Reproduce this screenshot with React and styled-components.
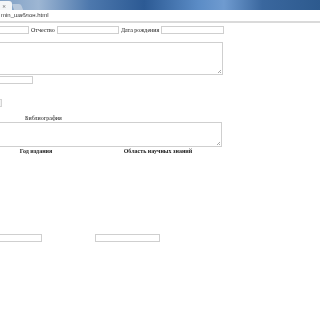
import React from 'react';
import styled, { createGlobalStyle } from 'styled-components';

const Global = createGlobalStyle`
  html, body {
    margin: 0;
    padding: 0;
    width: 320px;
    height: 320px;
    overflow: hidden;
    background: #ffffff;
  }
`;

function App() {
  return (
    <Window>
      <Global />
      <TitleBar>
        <Tab>
          <Close>×</Close>
        </Tab>
        <NewTab />
      </TitleBar>
      <AddressBar>min_шаблон.html</AddressBar>
      <Page>
        <Form>
          <Row>
            <Field $w={41} />
            <Label>Отчество</Label>
            <Field $w={62} />
            <Label>Дата рождения</Label>
            <Field $w={63} />
          </Row>
          <Area $w={235} $h={33} $top={8} />
          <Field $w={45} $top={1} />
          <Stub />
          <Caption>Библиография</Caption>
          <Area $w={234} $h={25} $top={0} />
          <HeadRow>
            <Head>Год издания</Head>
            <Head>Область научных знаний</Head>
          </HeadRow>
          <BottomRow>
            <Field $w={54} />
            <Field $w={65} />
          </BottomRow>
        </Form>
      </Page>
    </Window>
  );
}

const Window = styled.div`
  width: 320px;
  height: 320px;
  display: flex;
  flex-direction: column;
  overflow: hidden;
  will-change: transform;
`;

const TitleBar = styled.div`
  height: 10px;
  display: flex;
  align-items: flex-end;
  background: linear-gradient(90deg, #7f9fc4 0%, #9db6d3 12%, #4d78ad 28%, #2c5a94 45%, #5b8cc6 62%, #6f9bd0 70%, #3a679e 82%, #2d5a8e 100%);
`;

const Tab = styled.div`
  width: 10px;
  height: 9px;
  background: #f3f5f7;
  border-top-right-radius: 3px;
  display: flex;
  align-items: center;
  padding-left: 2px;
`;

const Close = styled.span`
  font: 5px "DejaVu Sans", sans-serif;
  color: #555;
`;

const NewTab = styled.div`
  width: 9px;
  height: 6px;
  margin-left: 1px;
  background: #b9c9dc;
  border-radius: 1px 2px 0 0;
  transform: skewX(20deg);
`;

const AddressBar = styled.div`
  height: 11px;
  background: #ffffff;
  border-bottom: 2px solid #dadada;
  font: 6px "Liberation Sans", Arial, sans-serif;
  color: #333;
  line-height: 11px;
  padding-left: 1px;
  white-space: nowrap;
`;

const Page = styled.div`
  flex: 1;
  background: #ffffff;
  overflow: hidden;
`;

const Form = styled.div`
  margin-left: -12px;
  padding-top: 3px;
  display: flex;
  flex-direction: column;
  align-items: flex-start;
  font-family: "Liberation Serif", "Times New Roman", serif;
  color: #222;
`;

const Row = styled.div`
  display: flex;
  align-items: center;
  gap: 1px;
`;

const Field = styled.div`
  width: ${p => p.$w}px;
  height: 8px;
  margin-top: ${p => p.$top || 0}px;
  box-sizing: border-box;
  border: 1px solid #cfcfcf;
  background: #fff;
`;

const Label = styled.span`
  font-size: 6px;
  line-height: 8px;
  padding: 0 1px;
  white-space: nowrap;
`;

const Area = styled.div`
  position: relative;
  width: ${p => p.$w}px;
  height: ${p => p.$h}px;
  margin-top: ${p => p.$top}px;
  box-sizing: border-box;
  border: 1px solid #cfcfcf;
  background: #fff;

  &::after {
    content: '';
    position: absolute;
    right: 1px;
    bottom: 1px;
    width: 3px;
    height: 3px;
    background: linear-gradient(135deg, transparent 45%, #aaa 45%, #aaa 55%, transparent 55%, transparent 75%, #aaa 75%, #aaa 85%, transparent 85%);
  }
`;

const Stub = styled.div`
  width: 14px;
  height: 8px;
  margin-top: 15px;
  box-sizing: border-box;
  border: 1px solid #d4d4d4;
  background: #f2f2f2;
`;

const Caption = styled.div`
  margin-top: 8px;
  margin-left: 37px;
  font-size: 6px;
  line-height: 7px;
`;

const HeadRow = styled.div`
  display: grid;
  grid-template-columns: 96px 148px;
  justify-items: center;
  margin-top: 1px;
`;

const Head = styled.div`
  font-size: 6px;
  font-weight: bold;
  line-height: 7px;
  white-space: nowrap;
`;

const BottomRow = styled.div`
  display: flex;
  gap: 53px;
  margin-top: 79px;
`;

export default App;
